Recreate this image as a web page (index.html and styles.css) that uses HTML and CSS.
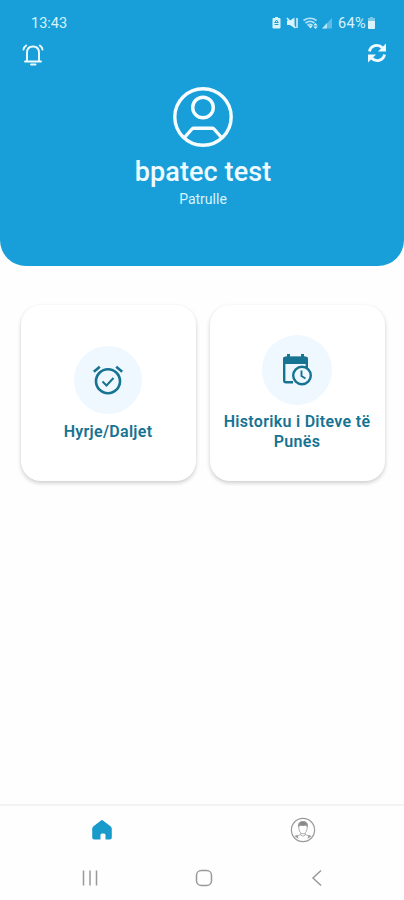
FILE: index.html
```
<!DOCTYPE html>
<html lang="sq">
<head>
<meta charset="utf-8">
<meta name="viewport" content="width=device-width, initial-scale=1">
<title>Patrulle</title>
<link rel="stylesheet" href="styles.css">
</head>
<body>
<div class="screen">
  <header class="hero">
    <div class="status">
      <span class="time">13:43</span>
      <div class="indicators">
        <svg width="67" height="16" viewBox="0 0 67 16" fill="currentColor">
          <path d="M3.500 3h1.500V2h3v1h1.500q1 0 1 1v8.500q0 1-1 1h-6q-1 0-1-1V4q0-1 1-1z"/>
          <path d="M6.500 5L4.700 7.500h3.600zM4.500 9.500h4" fill="none" stroke="#189fda" stroke-width="1"/>
          <path d="M17 5.500h3l4.500-3v10.500l-4.500-3h-3z"/>
          <path d="M17 3l8.500 10M27 3v10" fill="none" stroke="currentColor" stroke-width="1.500"/>
          <g fill="none" stroke="currentColor" stroke-width="1.700" opacity=".8"><path d="M33.500 5.500q6.500-4.500 13 0M35.500 8q4.500-3.500 9 0M37.500 10.500q2.500-2 5 0"/></g>
          <path d="M38.500 11h4l-2 2.500zM45.500 8l2.200 2.500h-4.400zM45.500 14l-2.200-2.500h4.400z"/>
          <path d="M52 13.500L62 3v10.500z" opacity=".35"/><path d="M52 13.500l5-5.500v5.500z" opacity=".75"/>
        </svg>
        <span class="percent">64%</span>
        <svg class="battery" width="9" height="14" viewBox="0 0 9 14" fill="currentColor"><path d="M1 2h2V1h3v1h2v4H1z" opacity=".5"/><path d="M1 5h7v7q0 1-1 1H2q-1 0-1-1z"/></svg>
      </div>
    </div>
    <div class="actions">
      <svg width="24" height="24" viewBox="0 0 24 24" fill="none" stroke="currentColor" stroke-width="1.900" stroke-linecap="round" stroke-linejoin="round">
        <path d="M4 18.500h16M6 18.500V10q0-6.500 6-6.500t6 6.500v8.500M10 21.500h4.500M2.500 6.500q.3-2.500 2.700-4M21.500 6.500q-.3-2.500-2.700-4"/>
      </svg>
      <svg width="20" height="20" viewBox="0 0 20 20" fill="none" stroke="currentColor" stroke-width="2.800">
        <path d="M2.500 8.500C3.500 2 11.500.5 15.500 5M17.500 11.500C16.500 18 8.500 19.500 4.500 15"/>
        <path d="M19 .5v8h-8zM1 19.500v-8h8z" fill="currentColor" stroke="none"/>
      </svg>
    </div>
    <div class="identity">
      <svg class="avatar" width="60" height="60" viewBox="0 0 60 60" fill="none" stroke="currentColor" stroke-width="3.400">
        <circle cx="30" cy="30" r="28.200"/><circle cx="30" cy="20.500" r="10.300"/>
        <path d="M11.500 50.500l7.500-8.500q.7-.8 2-.8h18q1.300 0 2 .8l7.500 8.500"/>
      </svg>
      <h1 class="name">bpatec test</h1>
      <p class="role">Patrulle</p>
    </div>
  </header>

  <main class="cards">
    <section class="card">
      <div class="bubble">
        <svg width="34" height="34" viewBox="0 0 34 34" fill="none" stroke="currentColor" stroke-width="2.600">
          <circle cx="17" cy="18.200" r="12"/><path d="M2.800 8.700l6-5M31.200 8.700l-6-5"/><path d="M11.500 18.500l4 4 7-7.500" stroke-width="2"/>
        </svg>
      </div>
      <h2 class="label">Hyrje/Daljet</h2>
    </section>
    <section class="card">
      <div class="bubble large">
        <svg width="32" height="34" viewBox="0 0 32 34" fill="none" stroke="currentColor" stroke-width="2.400">
          <path d="M12 29.300H5q-1.800 0-1.800-1.800V6.500q0-1.800 1.800-1.800h19q1.800 0 1.800 1.800V15"/>
          <path d="M2 10V6q0-2.300 2.300-2.300H6V1h3v2.700h11V1h3v2.700h1.700Q27 3.700 27 6v5H2z" fill="currentColor" stroke="none"/>
          <circle cx="21" cy="22.500" r="8.800"/><path d="M20.500 17.500v5.500l4 2.500" stroke-width="1.900"/>
        </svg>
      </div>
      <h2 class="label">Historiku i Diteve të Punës</h2>
    </section>
  </main>

  <footer class="bottom">
    <nav class="tabs">
      <svg class="home" width="22" height="22" viewBox="0 0 22 22" fill="currentColor"><path d="M2.500 7.200L10 1.400q1-.8 2 0l7.500 5.800q1.300 1 1.300 2.600v8.700q0 2-2 2h-4.300V16q0-1.500-1.500-1.500h-2Q9.500 14.500 9.500 16v4.500H3.200q-2 0-2-2V9.800q0-1.600 1.300-2.600z"/></svg>
      <svg class="profile" width="26" height="26" viewBox="0 0 26 26" fill="none" stroke="currentColor" stroke-width="1">
        <circle cx="13" cy="13" r="11.600" stroke-width="1.200"/>
        <path d="M8.900 9v3q1 4.800 4.100 4.800t4.100-4.800V9M10.800 16v2q2.200 2.500 4.400 0v-2M10.800 17.500l-5 2M15.200 17.500l5 2" opacity=".75"/>
        <path d="M8.500 10q-.7-5.500 4.500-5.500t4.500 5.500l-1-2q-3.500 1.200-7 0z" fill="#888"/>
        <path d="M4.500 19l3-1 1 4zM21.500 19l-3-1-1 4z" fill="#999" stroke="none"/>
      </svg>
    </nav>
    <div class="system">
      <svg width="18" height="18" viewBox="0 0 18 18" fill="none" stroke="currentColor" stroke-width="1.500"><path d="M2.500 1.500v15M9 1.500v15M15.500 1.500v15"/></svg>
      <svg width="18" height="18" viewBox="0 0 18 18" fill="none" stroke="currentColor" stroke-width="1.500"><rect x="1.500" y="1.500" width="15" height="15" rx="4.800"/></svg>
      <svg width="18" height="18" viewBox="0 0 18 18" fill="none" stroke="currentColor" stroke-width="1.500"><path d="M13 1.500L5 9l8 7.500"/></svg>
    </div>
  </footer>
</div>
</body>
</html>
```
FILE: styles.css
```
* { box-sizing: border-box; }
body { margin: 0; background: #fefefe; font-family: Roboto, "Liberation Sans", sans-serif; }
svg { display: block; flex: none; }
.screen { height: 900px; display: flex; flex-direction: column; overflow: hidden; }
.hero { height: 266px; background: #189fda; border-radius: 0 0 26px 26px; color: #effbff; }
.status { height: 43px; padding: 15px 28px 0 31px; display: flex; justify-content: space-between; font-size: 14.5px; line-height: 17px; color: #d9f3fc; }
.indicators { display: flex; }
.percent { width: 30px; padding-left: 1px; font-size: 14.5px; letter-spacing: .3px; white-space: nowrap; }
.battery { margin-top: 1px; }
.actions { height: 44px; padding: 0 17px 0 21px; display: flex; justify-content: space-between; }
.identity { display: flex; flex-direction: column; align-items: center; padding-left: 2px; }
.avatar { color: #f7fdff; }
.name { margin: 8px 0 0; font-size: 27px; line-height: 34px; font-weight: 500; letter-spacing: .1px; white-space: nowrap; }
.role { margin: 1px 0 0; font-size: 14px; line-height: 18px; color: #d9f3fc; }
.cards { display: grid; grid-template-columns: 175px 175px; gap: 14px; padding: 39px 19px 0 21px; }
.card { height: 176px; border-radius: 20px; background: #fff; box-shadow: 0 2px 4px rgba(0,0,0,.2); display: flex; flex-direction: column; align-items: center; justify-content: center; padding: 0 11px 0 10px; color: #167392; }
.card:first-child { padding-top: 2px; }
.bubble { width: 68px; height: 68px; border-radius: 50%; background: #eff8ff; display: grid; place-items: center; }
.large { width: 70px; height: 70px; }
.label { margin: 7px -4px 0; font-size: 16px; line-height: 20px; font-weight: 600; letter-spacing: .3px; text-align: center; }
.card:first-child .label { margin-top: 8px; }
.bottom { margin-top: auto; height: 96px; border-top: 2px solid #f3f3f3; }
.tabs { height: 47px; padding-left: 1px; display: grid; grid-template-columns: 1fr 1fr; place-items: center; }
.home { color: #189bcb; }
.profile { color: #999; }
.system { height: 49px; padding: 1px 78px 0 81px; display: flex; align-items: center; justify-content: space-between; color: #999; }
```
